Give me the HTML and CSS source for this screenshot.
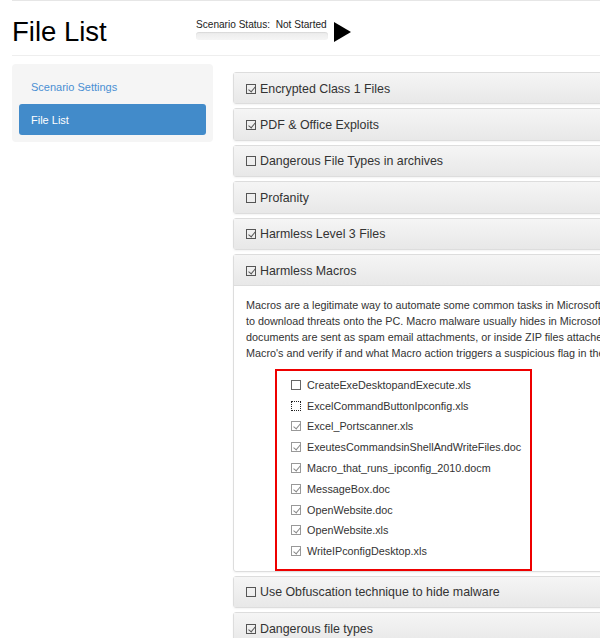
FILE: index.html
```html
<!DOCTYPE html>
<html lang="en">
<head>
    <meta charset="UTF-8">
    <meta name="viewport" content="width=device-width, initial-scale=1.0">
    <title>File List</title>
    <link rel="stylesheet" href="styles.css">
</head>
<body>
    <div class="topbar"></div>

    <div class="page">
        <!-- Page header -->
        <div class="page-header">
            <h1>File List</h1>
            <div class="status">
                <div class="status-text">Scenario Status:&nbsp; Not Started</div>
                <div class="progress"></div>
            </div>
            <svg class="play" width="17" height="20" viewBox="0 0 17 20">
                <polygon points="0,0 17,10 0,20" fill="#000"/>
            </svg>
        </div>

        <div class="main">
            <!-- Sidebar -->
            <div class="sidebar">
                <ul class="nav">
                    <li><a href="#">Scenario Settings</a></li>
                    <li class="active"><a href="#">File List</a></li>
                </ul>
            </div>

            <!-- Test groups -->
            <div class="panels">
                <div class="panel">
                    <div class="panel-heading"><span class="box on"></span>Encrypted Class 1 Files</div>
                </div>
                <div class="panel">
                    <div class="panel-heading"><span class="box on"></span>PDF &amp; Office Exploits</div>
                </div>
                <div class="panel">
                    <div class="panel-heading"><span class="box"></span>Dangerous File Types in archives</div>
                </div>
                <div class="panel">
                    <div class="panel-heading"><span class="box"></span>Profanity</div>
                </div>
                <div class="panel">
                    <div class="panel-heading"><span class="box on"></span>Harmless Level 3 Files</div>
                </div>
                <div class="panel">
                    <div class="panel-heading"><span class="box on"></span>Harmless Macros</div>
                    <div class="panel-body">
                        <p>Macros are a legitimate way to automate some common tasks in Microsoft Office, but cybercriminals abuse them<br>
                        to download threats onto the PC. Macro malware usually hides in Microsoft Office files (Word, Excel) and these<br>
                        documents are sent as spam email attachments, or inside ZIP files attached to emails. This test contains several<br>
                        Macro's and verify if and what Macro action triggers a suspicious flag in the scanner.</p>

                        <ul class="file-list">
                            <li><span class="cb"></span>CreateExeDesktopandExecute.xls</li>
                            <li><span class="cb focus"></span>ExcelCommandButtonIpconfig.xls</li>
                            <li><span class="cb on"></span>Excel_Portscanner.xls</li>
                            <li><span class="cb on"></span>ExeutesCommandsinShellAndWriteFiles.doc</li>
                            <li><span class="cb on"></span>Macro_that_runs_ipconfig_2010.docm</li>
                            <li><span class="cb on"></span>MessageBox.doc</li>
                            <li><span class="cb on"></span>OpenWebsite.doc</li>
                            <li><span class="cb on"></span>OpenWebsite.xls</li>
                            <li><span class="cb on"></span>WriteIPconfigDesktop.xls</li>
                        </ul>
                    </div>
                </div>
                <div class="panel">
                    <div class="panel-heading"><span class="box"></span>Use Obfuscation technique to hide malware</div>
                </div>
                <div class="panel">
                    <div class="panel-heading"><span class="box on"></span>Dangerous file types</div>
                </div>
            </div>
        </div>
    </div>
</body>
</html>
```

FILE: styles.css
```css
* {
    margin: 0;
    padding: 0;
    box-sizing: border-box;
}

body {
    font-family: 'Liberation Sans', Arial, sans-serif;
    color: #333;
    background: #fff;
    overflow: hidden;
}

.topbar {
    height: 1px;
    margin-left: 12px;
    background: #e6e6e6;
}

.page {
    padding-left: 12px;
}

/* Header */
.page-header {
    display: flex;
    align-items: flex-start;
    height: 55px;
    border-bottom: 1px solid #eee;
}

h1 {
    width: 94px;
    margin-top: 15px;
    font-size: 27.5px;
    font-weight: normal;
    line-height: 32px;
    white-space: nowrap;
    color: #000;
}

.status {
    margin: 18px 0 0 90px;
    width: 132px;
}

.status-text {
    font-size: 10.1px;
    line-height: 12px;
    color: #222;
}

.progress {
    height: 8px;
    margin-top: 1px;
    border-radius: 3px;
    background: linear-gradient(#ebebeb, #f5f5f5);
    box-shadow: inset 0 1px 1px rgba(0, 0, 0, 0.08);
}

.play {
    margin: 21px 0 0 6px;
}

/* Layout */
.main {
    display: flex;
    align-items: flex-start;
}

.sidebar {
    width: 201px;
    flex-shrink: 0;
    margin-top: 8px;
    padding: 7px;
    background: #f5f5f5;
    border-radius: 4px;
}

.nav {
    list-style: none;
}

.nav li + li {
    margin-top: 2px;
}

.nav a {
    display: block;
    height: 31px;
    line-height: 32px;
    padding: 0 12px;
    font-size: 11px;
    color: #4a8fd3;
    text-decoration: none;
    border-radius: 3px;
}

.nav .active a {
    background: #428bca;
    color: #fff;
}

.panels {
    width: 600px;
    flex-shrink: 0;
    margin: 16px 0 0 20px;
}

/* Panels */
.panel {
    border: 1px solid #ddd;
    border-radius: 3px;
    margin-bottom: 4px;
    box-shadow: 0 1px 2px rgba(0, 0, 0, 0.05);
}

.panel-heading {
    height: 30.4px;
    padding: 1px 12px 0;
    display: flex;
    align-items: center;
    font-size: 12.4px;
    background: linear-gradient(#f5f5f5, #e8e8e8);
}

.panel-body {
    border-top: 1px solid #ddd;
    padding: 11px 12px 0;
    font-size: 10.8px;
    line-height: 16px;
}

.panel-body p {
    white-space: nowrap;
    margin-bottom: 8px;
}

/* Checkbox glyphs */
.box {
    position: relative;
    width: 10px;
    height: 10px;
    margin-right: 4px;
    border: 1px solid #555;
    flex-shrink: 0;
}

.box.on::after,
.cb.on::after {
    content: "";
    position: absolute;
    left: 3px;
    top: 0;
    width: 3px;
    height: 6px;
    border-right: 1px solid #555;
    border-bottom: 1px solid #555;
    transform: rotate(40deg);
}

.file-list {
    list-style: none;
    width: 257px;
    margin-left: 29px;
    padding: 3px 0 7px 14px;
    border: 2px solid #e00;
}

.file-list li {
    display: flex;
    align-items: center;
    height: 20.8px;
}

.cb {
    position: relative;
    width: 10px;
    height: 10px;
    margin-right: 6px;
    border: 1px solid #666;
    background: #fff;
    flex-shrink: 0;
}

.cb.focus {
    border: 1px dotted #222;
}

.cb.on {
    border-color: #999;
}

.cb.on::after {
    border-color: #888;
}
```
